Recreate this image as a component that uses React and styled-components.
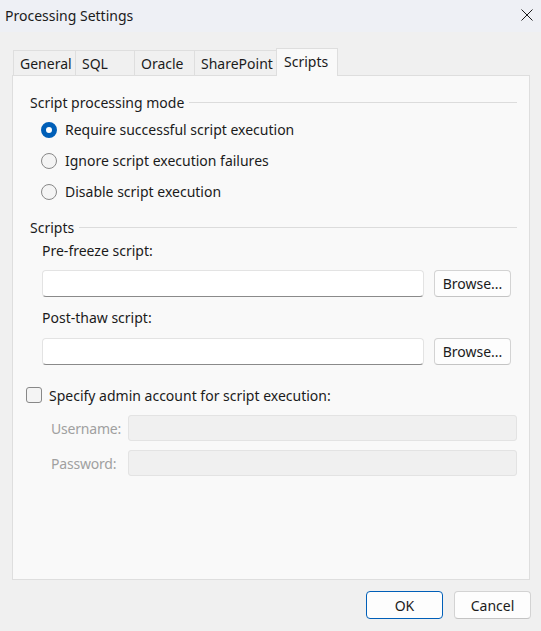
import React from 'react'
import styled, { createGlobalStyle } from 'styled-components'

const GlobalStyle = createGlobalStyle`
  html, body {
    margin: 0;
    padding: 0;
    background: #f0f0f0;
  }
  body {
    font-family: 'Noto Sans', 'Segoe UI', sans-serif;
    font-size: 14px;
    color: #1b1b1b;
  }
  * { box-sizing: border-box; }
`

const tabs = [
  { label: 'General', width: 63 },
  { label: 'SQL', width: 60 },
  { label: 'Oracle', width: 61 },
  { label: 'SharePoint', width: 83 },
  { label: 'Scripts', width: 62 },
]

const modes = [
  'Require successful script execution',
  'Ignore script execution failures',
  'Disable script execution',
]

const App = () => {
  return (
    <Window>
      <GlobalStyle />
      <TitleBar>
        <Title>Processing Settings</Title>
        <CloseIcon width='12' height='12' viewBox='0 0 12 12'>
          <path d='M0.5 0.5 L11.5 11.5 M11.5 0.5 L0.5 11.5' stroke='#1b1b1b' strokeWidth='1' fill='none' />
        </CloseIcon>
      </TitleBar>
      <Body>
        <TabStrip>
          {tabs.map((t) => (
            <Tab key={t.label} $width={t.width} $active={t.label === 'Scripts'}>
              {t.label}
            </Tab>
          ))}
        </TabStrip>
        <Panel>
          <GroupHeader>
            <span>Script processing mode</span>
            <Rule />
          </GroupHeader>
          <RadioList>
            {modes.map((m, i) => (
              <RadioRow key={m}>
                <Radio $checked={i === 0} />
                {m}
              </RadioRow>
            ))}
          </RadioList>

          <GroupHeader $top={10}>
            <span>Scripts</span>
            <Rule />
          </GroupHeader>
          <FieldLabel $top={4}>Pre-freeze script:</FieldLabel>
          <PathRow $top={9}>
            <TextBox />
            <Button>Browse...</Button>
          </PathRow>
          <FieldLabel $top={11}>Post-thaw script:</FieldLabel>
          <PathRow $top={10}>
            <TextBox />
            <Button>Browse...</Button>
          </PathRow>

          <CheckRow>
            <CheckBox />
            Specify admin account for script execution:
          </CheckRow>
          <CredRow $top={10}>
            <CredLabel>Username:</CredLabel>
            <DisabledBox />
          </CredRow>
          <CredRow $top={9}>
            <CredLabel>Password:</CredLabel>
            <DisabledBox />
          </CredRow>
        </Panel>
        <Footer>
          <Button $default $width={77}>OK</Button>
          <Button $width={77}>Cancel</Button>
        </Footer>
      </Body>
    </Window>
  )
}

export default App

const Window = styled.div`
  width: 541px;
  height: 631px;
  display: flex;
  flex-direction: column;
  background: #f0f0f0;
`

const TitleBar = styled.div`
  height: 32px;
  flex: none;
  display: flex;
  align-items: center;
  justify-content: space-between;
  padding: 0 8px 0 5px;
  background: #eef0f5;
`

const Title = styled.div`
  font-size: 14px;
  color: #1b1b1b;
  margin-top: -1px;
`

const CloseIcon = styled.svg`
  display: block;
  margin-top: -2px;
`

const Body = styled.div`
  flex: 1;
  display: flex;
  flex-direction: column;
  padding: 16px 11px 12px 12px;
`

const TabStrip = styled.div`
  display: flex;
  align-items: flex-end;
  height: 28px;
  margin-left: 1px;
  margin-bottom: -1px;
`

const Tab = styled.div`
  position: relative;
  width: ${(p) => p.$width}px;
  height: ${(p) => (p.$active ? 28 : 25)}px;
  margin-bottom: ${(p) => (p.$active ? 0 : 1)}px;
  margin-right: -1px;
  z-index: ${(p) => (p.$active ? 1 : 0)};
  display: flex;
  align-items: center;
  padding: 0 0 ${(p) => (p.$active ? 3 : 0)}px ${(p) => (p.$active ? 7 : 6)}px;
  border: 1px solid #dedede;
  border-bottom: none;
  background: ${(p) => (p.$active ? '#f9f9f9' : '#f0f0f0')};
  white-space: nowrap;
`

const Panel = styled.div`
  flex: 1;
  display: flex;
  flex-direction: column;
  padding-top: 16px;
  background: #f9f9f9;
  border: 1px solid #dedede;
`

const GroupHeader = styled.div`
  display: flex;
  align-items: center;
  height: 20px;
  margin: ${(p) => p.$top || 0}px 12px 0 17px;
  gap: 5px;
`

const Rule = styled.div`
  flex: 1;
  height: 1px;
  background: #dcdcdc;
`

const RadioList = styled.div`
  display: flex;
  flex-direction: column;
  margin: 2px 0 0 28px;
`

const RadioRow = styled.div`
  display: flex;
  align-items: center;
  gap: 8px;
  height: 31px;
`

const Radio = styled.span`
  width: 16px;
  height: 16px;
  flex: none;
  border-radius: 50%;
  background: ${(p) => (p.$checked ? '#ffffff' : '#f4f4f4')};
  border: ${(p) => (p.$checked ? '5px solid #005fb8' : '1px solid #888888')};
`

const FieldLabel = styled.div`
  height: 20px;
  line-height: 20px;
  margin: ${(p) => p.$top}px 0 0 29px;
`

const PathRow = styled.div`
  display: flex;
  gap: 10px;
  margin: ${(p) => p.$top}px 18px 0 29px;
`

const TextBox = styled.div`
  flex: 1;
  height: 27px;
  background: #ffffff;
  border: 1px solid #e3e3e3;
  border-bottom-color: #8a8a8a;
  border-radius: 4px;
`

const Button = styled.button`
  width: ${(p) => p.$width || 77}px;
  height: 27px;
  flex: none;
  padding: 0;
  font: inherit;
  color: #1b1b1b;
  background: #fdfdfd;
  border: 1px solid ${(p) => (p.$default ? '#005fb8' : '#d3d3d3')};
  border-bottom-color: ${(p) => (p.$default ? '#005fb8' : '#c4c4c4')};
  border-radius: 4px;
`

const CheckRow = styled.div`
  display: flex;
  align-items: center;
  gap: 7px;
  height: 20px;
  margin: 20px 0 0 13px;
`

const CheckBox = styled.span`
  width: 16px;
  height: 16px;
  flex: none;
  border-radius: 3px;
  border: 1px solid #888888;
  background: #f4f4f4;
`

const CredRow = styled.div`
  display: flex;
  align-items: center;
  margin: ${(p) => p.$top}px 12px 0 38px;
`

const CredLabel = styled.div`
  width: 77px;
  flex: none;
  color: #a0a0a0;
  letter-spacing: -0.2px;
`

const DisabledBox = styled.div`
  flex: 1;
  height: 26px;
  background: #f0f0f0;
  border: 1px solid #e3e3e3;
  border-radius: 3px;
`

const Footer = styled.div`
  display: flex;
  justify-content: flex-end;
  gap: 11px;
  margin: 11px -1px 0 0;

  & > button {
    height: 28px;
  }
`
